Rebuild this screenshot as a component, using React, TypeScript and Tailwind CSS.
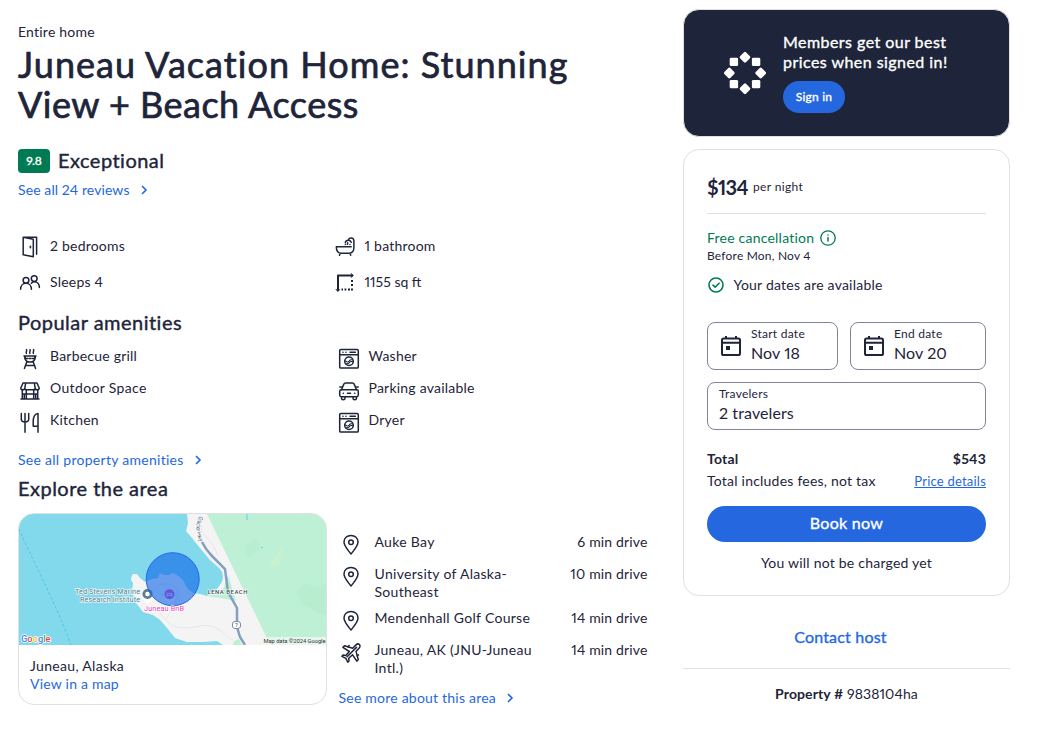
import type { ReactNode } from 'react';

const stroke = {
  fill: 'none',
  stroke: 'currentColor',
  strokeWidth: 1.5,
  strokeLinecap: 'round' as const,
  strokeLinejoin: 'round' as const,
};

function Icon({ children, className = 'size-6' }: { children: ReactNode; className?: string }) {
  return (
    <svg viewBox="0 0 24 24" className={`${className} shrink-0`} {...stroke}>
      {children}
    </svg>
  );
}

const DoorIcon = () => (
  <Icon>
    <path d="M5.2 2.300 15.3 4.2V21.800L5.2 19.7V2.300H18.6V19.2" />
    <path d="M12.4 11.2v1.6" />
  </Icon>
);

const PeopleIcon = () => (
  <Icon>
    <circle cx="8" cy="9.3" r="2.9" />
    <path d="M2.6 18.2c0-3.400 2.300-5.900 5.400-5.900s5.400 2.500 5.400 5.900" />
    <circle cx="16.200" cy="7.600" r="2.900" />
    <path d="M13.300 12.200c.8-.900 1.800-1.500 2.900-1.500 3.100 0 5.200 2.300 5.200 5.700" />
  </Icon>
);

const BathIcon = () => (
  <Icon>
    <path d="M3.300 11.700H18.200M3.300 11.700c0 4 1.800 6.500 5 6.500h7.900c3.200 0 4.700-2.300 4.700-5.900V6.100c0-1.800-1.200-3.100-2.700-3.100s-2.500.8-2.700 2.100M7.200 18.300l-.7 2M16.900 18.300l.8 2" />
    <path d="M12.300 7.700c.3-1.700 1.500-2.500 3-2.500s2.600.8 3 2.100M12.300 9.500v.1M14.700 7.800l-.3 1.500M17 9.500v.1" />
  </Icon>
);

const AreaIcon = () => (
  <Icon>
    <g strokeWidth="2" strokeLinecap="butt">
      <path d="M5 19.500V4.500H19.500" />
      <path d="M19 9v2M19 13v2M19 17.500v2M15 18.500h2M11.500 18.500h1.800M8.500 18.500h1.500" />
    </g>
    <path d="M18.500 2.600 20.500 4.500 18.500 6.400ZM3.100 18.500h3.800l-1.900 2Z" fill="currentColor" strokeWidth=".5" />
  </Icon>
);

const GrillIcon = () => (
  <Icon>
    <path d="M6 9h12M6.600 9c0 3.900 1.800 6 5.400 6s5.400-2.100 5.400-6M7.200 9v2.600h2.600M16.800 9v2.600h-2.600M8.900 14.500 6.400 21.400M15.100 14.500l2.500 6.900M7.500 18.500h9" />
    <path d="M8.400 6.400c-.7-1.200.8-2.500.1-3.800M11.900 6.400c-.7-1.200.8-2.500.1-3.800M15.400 6.400c-.7-1.200.8-2.500.1-3.800M11 11.600h2" />
  </Icon>
);

const PorchIcon = () => (
  <Icon>
    <path d="M5 4h14l2.200 5c0 1.300-.9 1.800-2 1.800s-2-.5-2-1.800c0 1.300-1 1.800-2.100 1.800H8.900c-1.100 0-2.100-.5-2.100-1.800 0 1.300-.9 1.800-2 1.800s-2-.5-2-1.800ZM7.700 4.200l-.9 4.800M16.300 4.200l.9 4.800" />
    <path d="M4.300 11v8.600M8.300 11v8.600M15.700 11v8.600M19.700 11v8.600M3 19.900h18M8.500 15h7M4.300 15h4M15.700 15h4M6.300 15v4.500M17.700 15v4.500" />
  </Icon>
);

const UtensilsIcon = () => (
  <Icon>
    <path d="M3.300 2.500v5.500c0 1.900 1.300 3 3.700 3s3.700-1.100 3.700-3V2.500M7 2.500v18.800M20 2.500c-2.900 0-4.800 3.200-4.800 7.600v5.200H20M20 2.500v18.800" />
  </Icon>
);

const WasherIcon = () => (
  <Icon>
    <rect x="2.700" y="2.500" width="18.600" height="18.600" rx="1.200" />
    <path d="M2.900 7.700h18.200M5.900 5.200h.1M8.900 5.200h.1M13 5.200h5.300" />
    <circle cx="12" cy="14.300" r="4.300" />
    <path d="M8.500 13.800c1.800 1.800 3 1.200 3.700.2.700-1 2-1.400 3.200-1M9.300 16.800c2.600.2 2.600-.6 3.200-1.400.6-.8 1.900-1.200 3.300-.6" strokeWidth="1.100" />
  </Icon>
);

const CarIcon = () => (
  <Icon>
    <path d="M4.500 10.700 6.700 5.400c.4-.900 1-1.300 1.900-1.300h6.800c.9 0 1.500.4 1.900 1.300L19.500 10.700" />
    <rect x="2.700" y="10.700" width="18.600" height="7" rx="1.600" />
    <path d="M2.800 8h1.700M19.500 8h1.700M4.500 17.900v1.300c0 1.900 3.500 1.900 3.500 0v-1.300M16 17.900v1.300c0 1.900 3.500 1.900 3.500 0v-1.300M6.200 14.200h.2M17.600 14.200h.2M10.500 14.200h3" />
  </Icon>
);

const PinIcon = () => (
  <Icon>
    <path d="M12 21c-3.100-4-7-7.900-7-12C5 5.100 8 2.400 12 2.400s7 2.700 7 6.600c0 4.100-3.900 8-7 12Z" />
    <circle cx="12" cy="9.300" r="2.300" />
  </Icon>
);

const PlaneIcon = () => (
  <Icon>
    <path d="M20.400 3.500c-.9-.8-2.500-.5-3.400.4l-3.300 3.300-8.200-2.400-1.600 1.600 6.400 4.100-3.500 3.900-2.700-.3-1.200 1.200 3.900 2 2 3.900 1.200-1.200-.3-2.700 3.900-3.500 4.200 6.400 1.500-1.600-2.300-8.200L20.200 7c.9-.9 1.100-2.600.2-3.500Z" />
    <path d="m8 15.800 9.500-9.400M9.100 6l1-1.500M18 14.800l1.500-1" />
  </Icon>
);

const CalendarIcon = () => (
  <Icon>
    <g strokeWidth="2" strokeLinecap="butt">
      <rect x="3" y="4.500" width="18" height="16.500" rx="1.600" />
      <path d="M3 8.700h18M7 2v3M17 2v3" />
    </g>
    <path d="M7 12h4v4H7z" fill="currentColor" stroke="none" />
  </Icon>
);

const LINK = 'text-[#1f68e0]';
const BODY = 'text-[14px] leading-[18px] tracking-[0.22px]';
const HEADING = 'text-[20px] leading-6 tracking-[0.48px] [-webkit-text-stroke:0.4px_currentColor]';
const MEDIUM = '[-webkit-text-stroke:0.35px_currentColor]';

function MoreLink({ children }: { children: ReactNode }) {
  return (
    <a className={`flex items-center ${BODY} ${LINK}`}>
      {children}
      <svg viewBox="0 0 8 10" className="ml-[10px] h-[10px] w-2" fill="none" stroke="currentColor" strokeWidth="1.600">
        <path d="m2 1 4 4-4 4" />
      </svg>
    </a>
  );
}

function Feature({ icon, lowered = false, children }: { icon: ReactNode; lowered?: boolean; children: ReactNode }) {
  return (
    <div className="flex h-6 gap-2">
      <div className={lowered ? 'pt-0.5' : ''}>{icon}</div>
      <span className={`${BODY} pt-0.5`}>{children}</span>
    </div>
  );
}

function AreaMap() {
  return (
    <svg viewBox="0 0 307 131" className="block h-[131px] w-full bg-[#82d9ec]" fontFamily="Roboto, sans-serif">
      <path
        fill="#f4f4f5"
        d="M168 0 169 9 167 17 173 24 181 34 191 46 199 53Q206 59 203 68L198 75 188 82 181 80 174 79 168 74 164 66 158 61 154 59 150 61 145 61 141 59 139 64 133 65 126 68 121 64 118 60 114 60Q110 65 114 69L113 78 117 89 124 98 134 101 141 106 148 114 156 124 168 128H184L198 127 204 131H307V0Z"
      />
      <path fill="#bdf0d5" d="M188 0H307V131H251L243 114 214 54ZM209 61 217 87 201 84 188 82 204 76ZM215 127l5-2 3 6h-9Z" />
      <path fill="#aee7c7" d="m228 30 8-5 6 9-11 9-5-4ZM278 78l8-9 10 4 11-3v32l-10-4-14-8Z" opacity=".3" />
      <path d="M228 0v6M242 33l2 1" stroke="#7bd8ee" strokeWidth="1.500" />
      <path d="m250 49 8-8 6-9-3 18-7 3Z" fill="#cef1cb" opacity=".6" />
      <path d="M0 15C15 50 36 87 52 131" fill="none" stroke="#54c6dc" strokeDasharray="3 2" />
      <path d="M141 99c8 10 12 15 25 15s20-6 31 0 11 10 17 12M135 77c2-8 17-10 22-2s-6 24-10 30M182 11c0 12 12 14 17 31" fill="none" stroke="#e4e6e9" />
      <path d="M183 28C186 34 189 38 193 42L206 55 209 78 218 94V113L221 123 226 131" fill="none" stroke="#859fc2" strokeWidth="2.500" />
      <path id="hwy" d="M180.500 2C176 11 176 19 182 30" fill="none" />
      <text fontSize="6.200" fill="#4a5c68" stroke="#fff" strokeWidth="1.200" paintOrder="stroke">
        <textPath href="#hwy" textLength="27" lengthAdjust="spacingAndGlyphs">Glacier Hwy</textPath>
      </text>
      <g fontSize="7.300" fill="#5e7f8d" stroke="#e9f7fa" strokeWidth="1.400" paintOrder="stroke" textAnchor="end">
        <text x="121" y="80" textLength="65">Ted Stevens Marine</text>
        <text x="121" y="87.500" textLength="60">Research Institute</text>
      </g>
      <path d="M123 82c0 4 3 5 5.500 8 2.500-3 5.500-4 5.500-8Z" fill="#fff" />
      <circle cx="128.500" cy="80" r="3.700" fill="#fff" stroke="#607d8b" strokeWidth="2.800" />
      <path d="M145 82c0 4 3 5 5.500 8 2.500-3 5.500-4 5.500-8Z" fill="#fff" />
      <circle cx="150.500" cy="80.300" r="5" fill="#e645c1" />
      <path d="M148 78.500v4M148 81.500h5v-2h-4M153 81.500v1" stroke="#fff" strokeWidth=".8" fill="none" />
      <circle cx="153.700" cy="65.200" r="26.500" fill="#0a60e8" fillOpacity=".6" stroke="#2767ea" />
      <text x="125" y="96.500" fontSize="7.300" fill="#ed3cb5" stroke="#fff" strokeWidth="1.200" paintOrder="stroke" textLength="40">
        Juneau BnB
      </text>
      <text x="188.500" y="80.300" fontSize="6" fontWeight="500" fill="#3f4d51" stroke="#fff" strokeWidth="1.200" paintOrder="stroke" textLength="40">
        LENA BEACH
      </text>
      <rect x="213.500" y="107.500" width="8" height="7" rx="2.500" fill="#fff" stroke="#7b8d98" />
      <path d="M216.200 109.500h2.400l-1.300 3.300" fill="none" stroke="#7b8d98" strokeWidth=".8" />
      <text x="2" y="127.500" fontSize="9.300" fontWeight="500" stroke="#fff" strokeWidth="1.500" paintOrder="stroke">
        <tspan fill="#4285f4">G</tspan>
        <tspan fill="#ea4335">o</tspan>
        <tspan fill="#fbbc05">o</tspan>
        <tspan fill="#4285f4">g</tspan>
        <tspan fill="#34a853">l</tspan>
        <tspan fill="#ea4335">e</tspan>
      </text>
      <path d="M243 123h64v8h-64Z" fill="#f3f6f4" fillOpacity=".8" />
      <text x="244.500" y="129" fontSize="5.800" fill="#333" textLength="62">
        Map data ©2024 Google
      </text>
    </svg>
  );
}

const places = [
  { name: 'Auke Bay', time: '6 min drive' },
  { name: 'University of Alaska-Southeast', time: '10 min drive' },
  { name: 'Mendenhall Golf Course', time: '14 min drive' },
  { name: 'Juneau, AK (JNU-Juneau Intl.)', time: '14 min drive', airport: true },
];

function Details() {
  return (
    <main className="flex w-[630px] flex-col">
      <p className={`${BODY} mt-[23px]`}>Entire home</p>
      <h1 className="mt-[3px] text-[36px] leading-[40px] whitespace-nowrap [-webkit-text-stroke:0.7px_currentColor]">
        <span className="block tracking-[1.050px]">Juneau Vacation Home: Stunning</span>
        <span className="block tracking-[0.480px]">View + Beach Access</span>
      </h1>
      <div className="mt-[25px] flex h-6 items-center">
        <span className={`flex h-6 w-8 items-center justify-center rounded bg-[#007a52] text-[12px] text-white ${MEDIUM}`}>9.8</span>
        <h2 className={`ml-2 pb-0.5 ${HEADING}`}>Exceptional</h2>
      </div>
      <div className="mt-2 tracking-[0.1px]">
        <MoreLink>
          <span className="tracking-[0.100px]">See all 24 reviews</span>
        </MoreLink>
      </div>
      <div className="mt-9 grid grid-cols-[314.500px_1fr] gap-y-3">
        <Feature icon={<DoorIcon />}>2 bedrooms</Feature>
        <Feature icon={<BathIcon />}>1 bathroom</Feature>
        <Feature icon={<PeopleIcon />}>Sleeps 4</Feature>
        <Feature icon={<AreaIcon />}>
          <span className="tracking-normal">1155 sq ft</span>
        </Feature>
      </div>
      <h2 className={`mt-[15px] ${HEADING}`}>Popular amenities</h2>
      <div className="mt-[11px] grid grid-cols-[318.500px_1fr] gap-y-2">
        <Feature lowered icon={<GrillIcon />}>Barbecue grill</Feature>
        <Feature lowered icon={<WasherIcon />}>Washer</Feature>
        <Feature lowered icon={<PorchIcon />}>
          <span className="tracking-[0.350px]">Outdoor Space</span>
        </Feature>
        <Feature lowered icon={<CarIcon />}>Parking available</Feature>
        <Feature lowered icon={<UtensilsIcon />}>Kitchen</Feature>
        <Feature lowered icon={<WasherIcon />}>Dryer</Feature>
      </div>
      <div className="mt-[18px]">
        <MoreLink>
          <span className="tracking-[0.280px]">See all property amenities</span>
        </MoreLink>
      </div>
      <h2 className={`mt-[7px] ${HEADING}`}>Explore the area</h2>
      <div className="mt-[13px] flex">
        <div className="h-48 w-[309px] overflow-hidden rounded-2xl border border-[#dfe0e4]">
          <AreaMap />
          <div className={`${BODY} px-[11px] pt-3`}>
            <p className="tracking-[0.320px]">Juneau, Alaska</p>
            <a className={LINK}>View in a map</a>
          </div>
        </div>
        <div className="ml-[11.500px] flex flex-1 flex-col pt-5">
          <ul className="flex flex-col gap-2">
            {places.map((p) => (
              <li key={p.name} className={`flex min-h-6 ${BODY}`}>
                {p.airport ? <PlaneIcon /> : <PinIcon />}
                <span className="ml-3 w-[168px] tracking-[0.3px]">{p.name}</span>
                <span className="ml-auto pr-[0.500px] whitespace-nowrap tracking-[0.150px]">{p.time}</span>
              </li>
            ))}
          </ul>
          <div className="mt-3">
            <MoreLink>See more about this area</MoreLink>
          </div>
        </div>
      </div>
    </main>
  );
}

function MemberLogo() {
  return (
    <svg viewBox="-22 -22 44 44" className="size-11 shrink-0" fill="#fff">
      {[0, 45, 90, 135, 180, 225, 270, 315].map((a) => (
        <rect key={a} x="-4.200" y="-4.200" width="8.400" height="8.400" rx="1.400" transform={`rotate(${a}) translate(0 -15.700) rotate(45)`} />
      ))}
    </svg>
  );
}

function DateField({ label, value, className }: { label: string; value: string; className: string }) {
  return (
    <div className={`flex h-12 items-center rounded-lg border border-[#818494] pl-[11px] ${className}`}>
      <CalendarIcon />
      <div className="ml-2 pb-0.5">
        <p className="text-[12px] leading-[16px] tracking-[0.250px]">{label}</p>
        <p className="text-[16px] leading-[22px] tracking-[0.1px]">{value}</p>
      </div>
    </div>
  );
}

function Booking() {
  return (
    <aside className="flex w-[327px] flex-col">
      <section className="mt-[9px] flex h-32 rounded-2xl border border-[#dfe0e4] bg-[#1e243a] pt-[22px] pl-[39px] text-white">
        <div className="mt-[19px]">
          <MemberLogo />
        </div>
        <div className="ml-4">
          <p className={`text-[16px] leading-[20px] tracking-[0.45px] ${MEDIUM}`}>
            Members get our best
            <br />
            prices when signed in!
          </p>
          <button className={`mt-[9px] h-8 w-[62px] rounded-full bg-[#2467df] text-[12px] tracking-[0.2px] ${MEDIUM}`}>Sign in</button>
        </div>
      </section>
      <section className="mt-3 h-[447px] rounded-2xl border border-[#dfe0e4] px-[23px]">
        <div className="mt-[25px] flex h-6 items-center">
          <span className="w-[46px] text-[20px] font-bold tracking-[-0.700px]">$134</span>
          <span className="text-[12px] tracking-[0.35px]">per night</span>
        </div>
        <hr className="mt-[14px] border-[#dfe0e4]" />
        <div className={`mt-[15px] flex h-[19px] text-[#007a52] ${BODY}`}>
          Free cancellation
          <svg viewBox="0 0 16 16" className="mt-px ml-1.5 size-4" {...stroke}>
            <circle cx="8" cy="8" r="7.200" strokeWidth="1.300" />
            <path d="M8 7.500v3.500M8 4.900v.1" />
          </svg>
        </div>
        <p className="text-[12px] leading-[16px] tracking-[0.2px]">Before Mon, Nov 4</p>
        <div className={`mt-3 flex items-center ${BODY}`}>
          <svg viewBox="0 0 18 18" className="size-[18px] text-[#007a52]" {...stroke}>
            <circle cx="9" cy="9" r="7" strokeWidth="1.600" />
            <path d="m6 9.200 2.100 2 4-4" strokeWidth="1.600" />
          </svg>
          <span className="ml-[8.500px]">Your dates are available</span>
        </div>
        <div className="mt-7 flex justify-between">
          <DateField label="Start date" value="Nov 18" className="w-[131px]" />
          <DateField label="End date" value="Nov 20" className="w-[136px]" />
        </div>
        <div className="mt-3 flex h-12 flex-col justify-center rounded-lg border border-[#818494] px-[11px] pb-0.5">
          <p className="text-[12px] leading-[16px] tracking-[0.250px]">Travelers</p>
          <p className="text-[16px] leading-[22px] tracking-[0.1px]">2 travelers</p>
        </div>
        <div className={`mt-5 flex justify-between font-bold ${BODY}`}>
          <span>Total</span>
          <span>$543</span>
        </div>
        <div className={`mt-1 flex justify-between ${BODY}`}>
          <span>Total includes fees, not tax</span>
          <a className={`text-[13px] underline ${LINK}`}>Price details</a>
        </div>
        <button className={`mt-4 h-9 w-full rounded-full bg-[#2467df] pb-0.5 text-[16px] tracking-[0.3px] text-white ${MEDIUM}`}>Book now</button>
        <p className={`mt-3 text-center ${BODY}`}>You will not be charged yet</p>
      </section>
      <a className={`mt-[31px] mr-3 text-center text-[16px] leading-5 tracking-[0.2px] ${LINK} ${MEDIUM}`}>Contact host</a>
      <hr className="mt-[21px] border-[#dfe0e4]" />
      <p className="mt-4 text-center text-[14px] leading-[18px] tracking-[0.1px]">
        <b className="font-bold">Property #</b> 9838104ha
      </p>
    </aside>
  );
}

export default function App() {
  return (
    <div className="flex h-[733px] w-[1044px] overflow-hidden bg-white pl-[18px] font-['Lato',sans-serif] text-[#1e243a] proportional-nums">
      <Details />
      <div className="ml-[35px]">
        <Booking />
      </div>
    </div>
  );
}
